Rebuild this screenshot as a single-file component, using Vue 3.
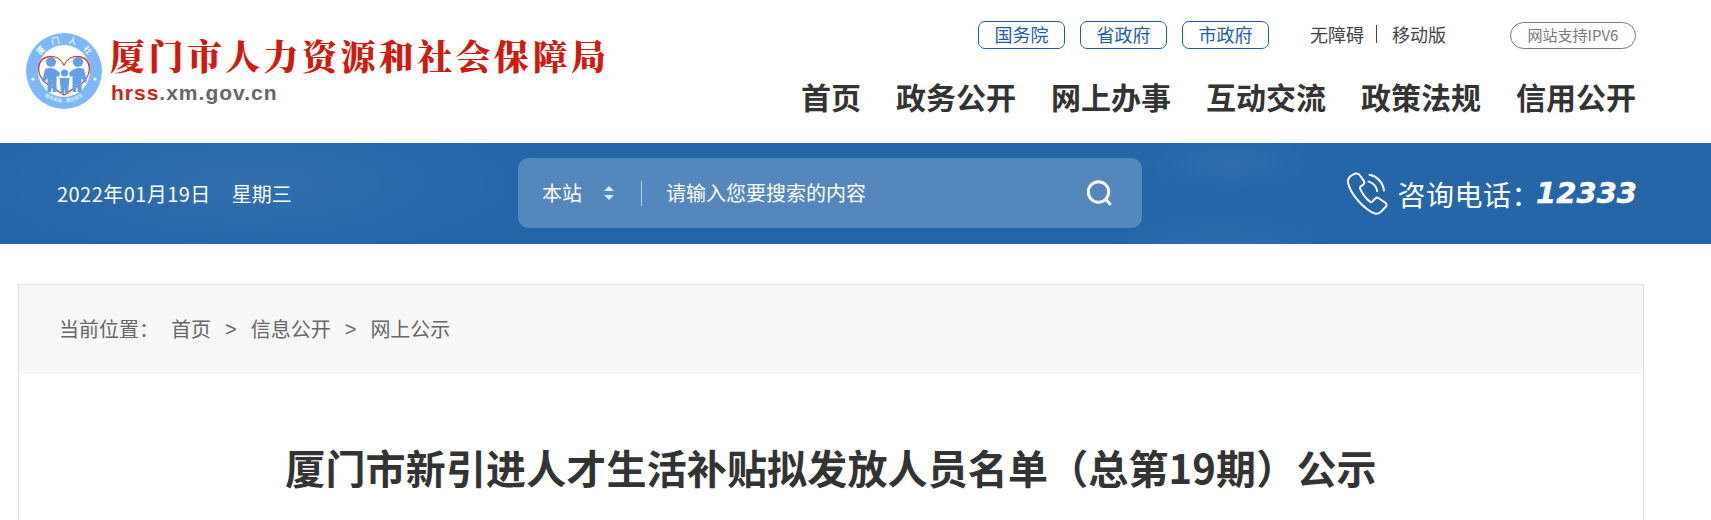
<script setup>
const govLinks = ['国务院', '省政府', '市政府']
const navItems = ['首页', '政务公开', '网上办事', '互动交流', '政策法规', '信用公开']
</script>

<template>
  <div class="page">
    <header class="header">
      <div class="brand">
        <svg class="emblem" viewBox="0 0 76 76" width="76" height="76">
          <defs>
            <path id="arcTop" d="M22.6 62 A28.5 28.5 0 1 1 53.4 62" />
            <path id="arcBottom" d="M5.5 42 A33 33 0 0 0 70.5 42" />
          </defs>
          <circle cx="38" cy="38" r="38" fill="#7db8fb" />
          <circle cx="38" cy="38" r="26" fill="#fff" />
          <text class="emblem-top"><textPath href="#arcTop" startOffset="50%" text-anchor="middle">厦　门　人　社</textPath></text>
          <text class="emblem-bottom"><textPath href="#arcBottom" startOffset="50%" text-anchor="middle">服务发展　服务民生</textPath></text>
          <circle cx="7" cy="46" r="1.6" fill="#fff" />
          <circle cx="69" cy="46" r="1.6" fill="#fff" />
          <path d="M38 62 L20 50 C10 42 10 27 21 24 C29 22 35 26 38 32 C41 26 47 22 55 24 C66 27 66 42 56 50 Z" fill="none" stroke="#e0352b" stroke-width="1.3" />
          <g fill="#5fa0e6">
            <circle cx="25" cy="29" r="5" />
            <circle cx="52" cy="29" r="5" />
            <circle cx="38.5" cy="40" r="3.6" />
            <path d="M19 36 C24 34 29 35 34 40 L33 44 L30.5 43 L30.5 59 L27 59 L26.4 51 L25 59 L21.5 59 L21.5 45 L18 50 L16.2 48 Z" />
            <path d="M58 36 C53 34 48 35 43 40 L44 44 L46.5 43 L46.5 59 L50 59 L50.6 51 L52 59 L55.5 59 L55.5 45 L59 50 L60.8 48 Z" />
            <path d="M33.5 45 L43.5 45 L42.5 54 L42 61 L39.2 61 L38.5 55 L37.8 61 L35 61 L34.5 54 Z" />
          </g>
        </svg>
        <div class="brand-text">
          <div class="brand-name">厦门市人力资源和社会保障局</div>
          <div class="brand-url"><span class="brand-url-red">hrss</span>.xm.gov.cn</div>
        </div>
      </div>
      <div class="header-right">
        <div class="top-row">
          <div class="gov-links">
            <a v-for="item in govLinks" :key="item" class="gov-link">{{ item }}</a>
          </div>
          <div class="tools">
            <span>无障碍</span>
            <i class="tool-sep"></i>
            <span>移动版</span>
          </div>
          <div class="ipv6">网站支持IPV6</div>
        </div>
        <nav class="nav">
          <a v-for="item in navItems" :key="item" class="nav-item">{{ item }}</a>
        </nav>
      </div>
    </header>

    <section class="banner">
      <div class="date">
        <span class="date-day">2022年01月19日</span>
        <span>星期三</span>
      </div>
      <div class="search">
        <span class="scope">本站</span>
        <span class="scope-arrows"><i class="arrow-up"></i><i class="arrow-down"></i></span>
        <i class="search-sep"></i>
        <span class="placeholder">请输入您要搜索的内容</span>
        <svg class="search-icon" viewBox="0 0 28 28" width="28" height="28" fill="none" stroke="#fff" stroke-width="3" stroke-linecap="round">
          <circle cx="13.5" cy="13" r="10.2" />
          <path d="M20.8 20.5 L25 25" />
        </svg>
      </div>
      <div class="hotline">
        <svg class="phone" viewBox="0 0 44 44" width="44" height="44" fill="none" stroke="#fff" stroke-width="2" stroke-linejoin="round" stroke-linecap="round">
          <path d="M6.5 2.8 C3.4 4.4 1.4 7.6 2.2 11.2 C4 19.6 13.6 33.2 25.6 40.2 C29 42.2 33 42 35.4 39.4 L39.8 34.8 C41 33.4 40.8 31.8 39.4 30.8 L32.8 26.2 C31.4 25.2 30 25.6 29 26.8 L26.6 29.4 C25.8 30.2 24.8 30.2 24 29.6 C20 26.6 16.4 21.8 14.2 16.8 C13.8 15.8 14 15 14.8 14.4 L17.2 12.6 C18.4 11.6 18.6 10.2 17.8 8.8 L13.6 3 C12.2 1.2 9.4 1.2 6.5 2.8 Z" />
          <path d="M22.6 9.6 C27.2 10.8 30.4 14.4 31.2 19" />
          <path d="M23.6 2.8 C31.2 4.4 37 10.4 38 18.4" />
        </svg>
        <span class="hotline-label">咨询电话：</span>
        <span class="hotline-number">12333</span>
      </div>
    </section>

    <main class="card">
      <div class="crumbs">
        <span class="crumb-label">当前位置：</span>
        <span>首页</span>
        <span class="crumb-gt">&gt;</span>
        <span>信息公开</span>
        <span class="crumb-gt">&gt;</span>
        <span>网上公示</span>
      </div>
      <h1 class="title">厦门市新引进人才生活补贴拟发放人员名单（总第19期）公示</h1>
    </main>
  </div>
</template>

<style>
html, body { margin: 0; background: #fff; overflow: hidden; }
</style>

<style scoped>
.page {
  width: 1711px;
  height: 520px;
  overflow: hidden;
  font-family: "Noto Sans CJK SC", "Noto Sans", sans-serif;
  color: #333;
}
.header {
  height: 143px;
  box-sizing: border-box;
  padding: 21px 75px 0 26px;
  display: flex;
  justify-content: space-between;
}
.brand {
  display: flex;
  align-items: flex-start;
  gap: 8px;
  padding-top: 12px;
}
.emblem { flex: none; }
.emblem-top { font-size: 8px; fill: #fff; font-weight: 500; }
.emblem-bottom { font-size: 4.6px; fill: #fff; }
.brand-text { display: flex; flex-direction: column; }
.brand-name {
  font-family: "Noto Serif CJK SC", "Noto Sans CJK SC", serif;
  font-size: 35px;
  font-weight: 900;
  line-height: 44px;
  letter-spacing: 3.4px;
  color: #cf1a10;
  white-space: nowrap;
}
.brand-url {
  font-family: "Liberation Sans", Arial, sans-serif;
  font-size: 21px;
  font-weight: 700;
  line-height: 24px;
  letter-spacing: 1px;
  color: #666;
  margin: 4px 0 0 1px;
}
.brand-url-red { color: #c8261b; }
.header-right {
  display: flex;
  flex-direction: column;
  align-items: flex-end;
}
.top-row {
  display: flex;
  align-items: center;
  height: 28px;
  font-size: 18px;
}
.gov-links { display: flex; gap: 15px; }
.gov-link {
  width: 87px;
  height: 28px;
  box-sizing: border-box;
  border: 1px solid #1f5ca3;
  border-radius: 7px;
  padding-bottom: 3px;
  color: #1f5ca3;
  display: flex;
  align-items: center;
  justify-content: center;
  line-height: 1;
}
.tools {
  display: flex;
  align-items: center;
  margin-left: 41px;
  padding-bottom: 3px;
  color: #444;
  line-height: 1;
}
.tool-sep {
  width: 1px;
  height: 18px;
  background: #444;
  margin: 0 15px 0 12px;
}
.ipv6 {
  margin-left: 64px;
  width: 126px;
  height: 27px;
  box-sizing: border-box;
  border: 1px solid #777;
  border-radius: 14px;
  padding-bottom: 2px;
  color: #777;
  font-size: 15px;
  display: flex;
  align-items: center;
  justify-content: center;
  line-height: 1;
}
.nav {
  display: flex;
  gap: 35px;
  margin-top: 27px;
  font-size: 30px;
  font-weight: 700;
  line-height: 40px;
  color: #333;
}
.banner {
  position: relative;
  height: 101px;
  display: flex;
  align-items: center;
  color: #fff;
  background-color: #2566a9;
  background-image:
    radial-gradient(ellipse 380px 110px at 250px 40px, rgba(255,255,255,.06), transparent 70%),
    radial-gradient(ellipse 120px 40px at 1230px 20px, rgba(255,255,255,.05), transparent 70%),
    radial-gradient(ellipse 160px 60px at 1220px 110px, rgba(255,255,255,.05), transparent 70%);
}
.date {
  width: 518px;
  box-sizing: border-box;
  padding-left: 57px;
  flex: none;
  display: flex;
  gap: 21px;
  font-size: 20px;
  line-height: 1;
}
.date-day { letter-spacing: .45px; }
.search {
  width: 624px;
  height: 70px;
  flex: none;
  box-sizing: border-box;
  margin-bottom: 1px;
  padding: 0 29px 0 24px;
  border-radius: 11px;
  background: rgba(255,255,255,.22);
  display: flex;
  align-items: center;
  font-size: 20px;
  line-height: 1;
}
.scope-arrows {
  display: flex;
  flex-direction: column;
  gap: 4px;
  margin-left: 22px;
}
.arrow-up, .arrow-down {
  width: 0;
  height: 0;
  border-left: 5px solid transparent;
  border-right: 5px solid transparent;
}
.arrow-up { border-bottom: 5px solid #e4ecf5; }
.arrow-down { border-top: 5px solid #e4ecf5; }
.search-sep {
  width: 1px;
  height: 25px;
  background: rgba(255,255,255,.6);
  margin: 0 24px 0 27px;
}
.placeholder { flex: 1; }
.search-icon { flex: none; }
.hotline {
  margin-left: auto;
  margin-right: 74px;
  display: flex;
  align-items: center;
}
.phone { flex: none; margin-right: 8px; }
.hotline-label {
  font-size: 28px;
  letter-spacing: .5px;
  line-height: 1;
  white-space: nowrap;
}
.hotline-number {
  font-family: "DejaVu Sans", sans-serif;
  font-size: 29px;
  font-weight: 700;
  font-style: italic;
  line-height: 1;
  margin-left: -4px;
  -webkit-text-stroke: .5px #fff;
}
.card {
  margin: 40px 0 0 18px;
  width: 1626px;
  box-sizing: border-box;
  border: 1px solid #e2e2e2;
  border-bottom: 0;
  height: 300px;
}
.crumbs {
  height: 89px;
  background: #f7f7f7;
  box-sizing: border-box;
  padding: 0 0 2px 40px;
  display: flex;
  align-items: center;
  font-size: 20px;
  line-height: 1;
  color: #666;
}
.crumb-label { margin-right: 12px; }
.crumb-gt { margin: 0 14px; font-family: "Liberation Sans", sans-serif; }
.title {
  margin: 65px 0 0;
  text-align: center;
  font-size: 40px;
  font-weight: 700;
  line-height: 56px;
  letter-spacing: .15px;
  color: #333;
}
</style>
